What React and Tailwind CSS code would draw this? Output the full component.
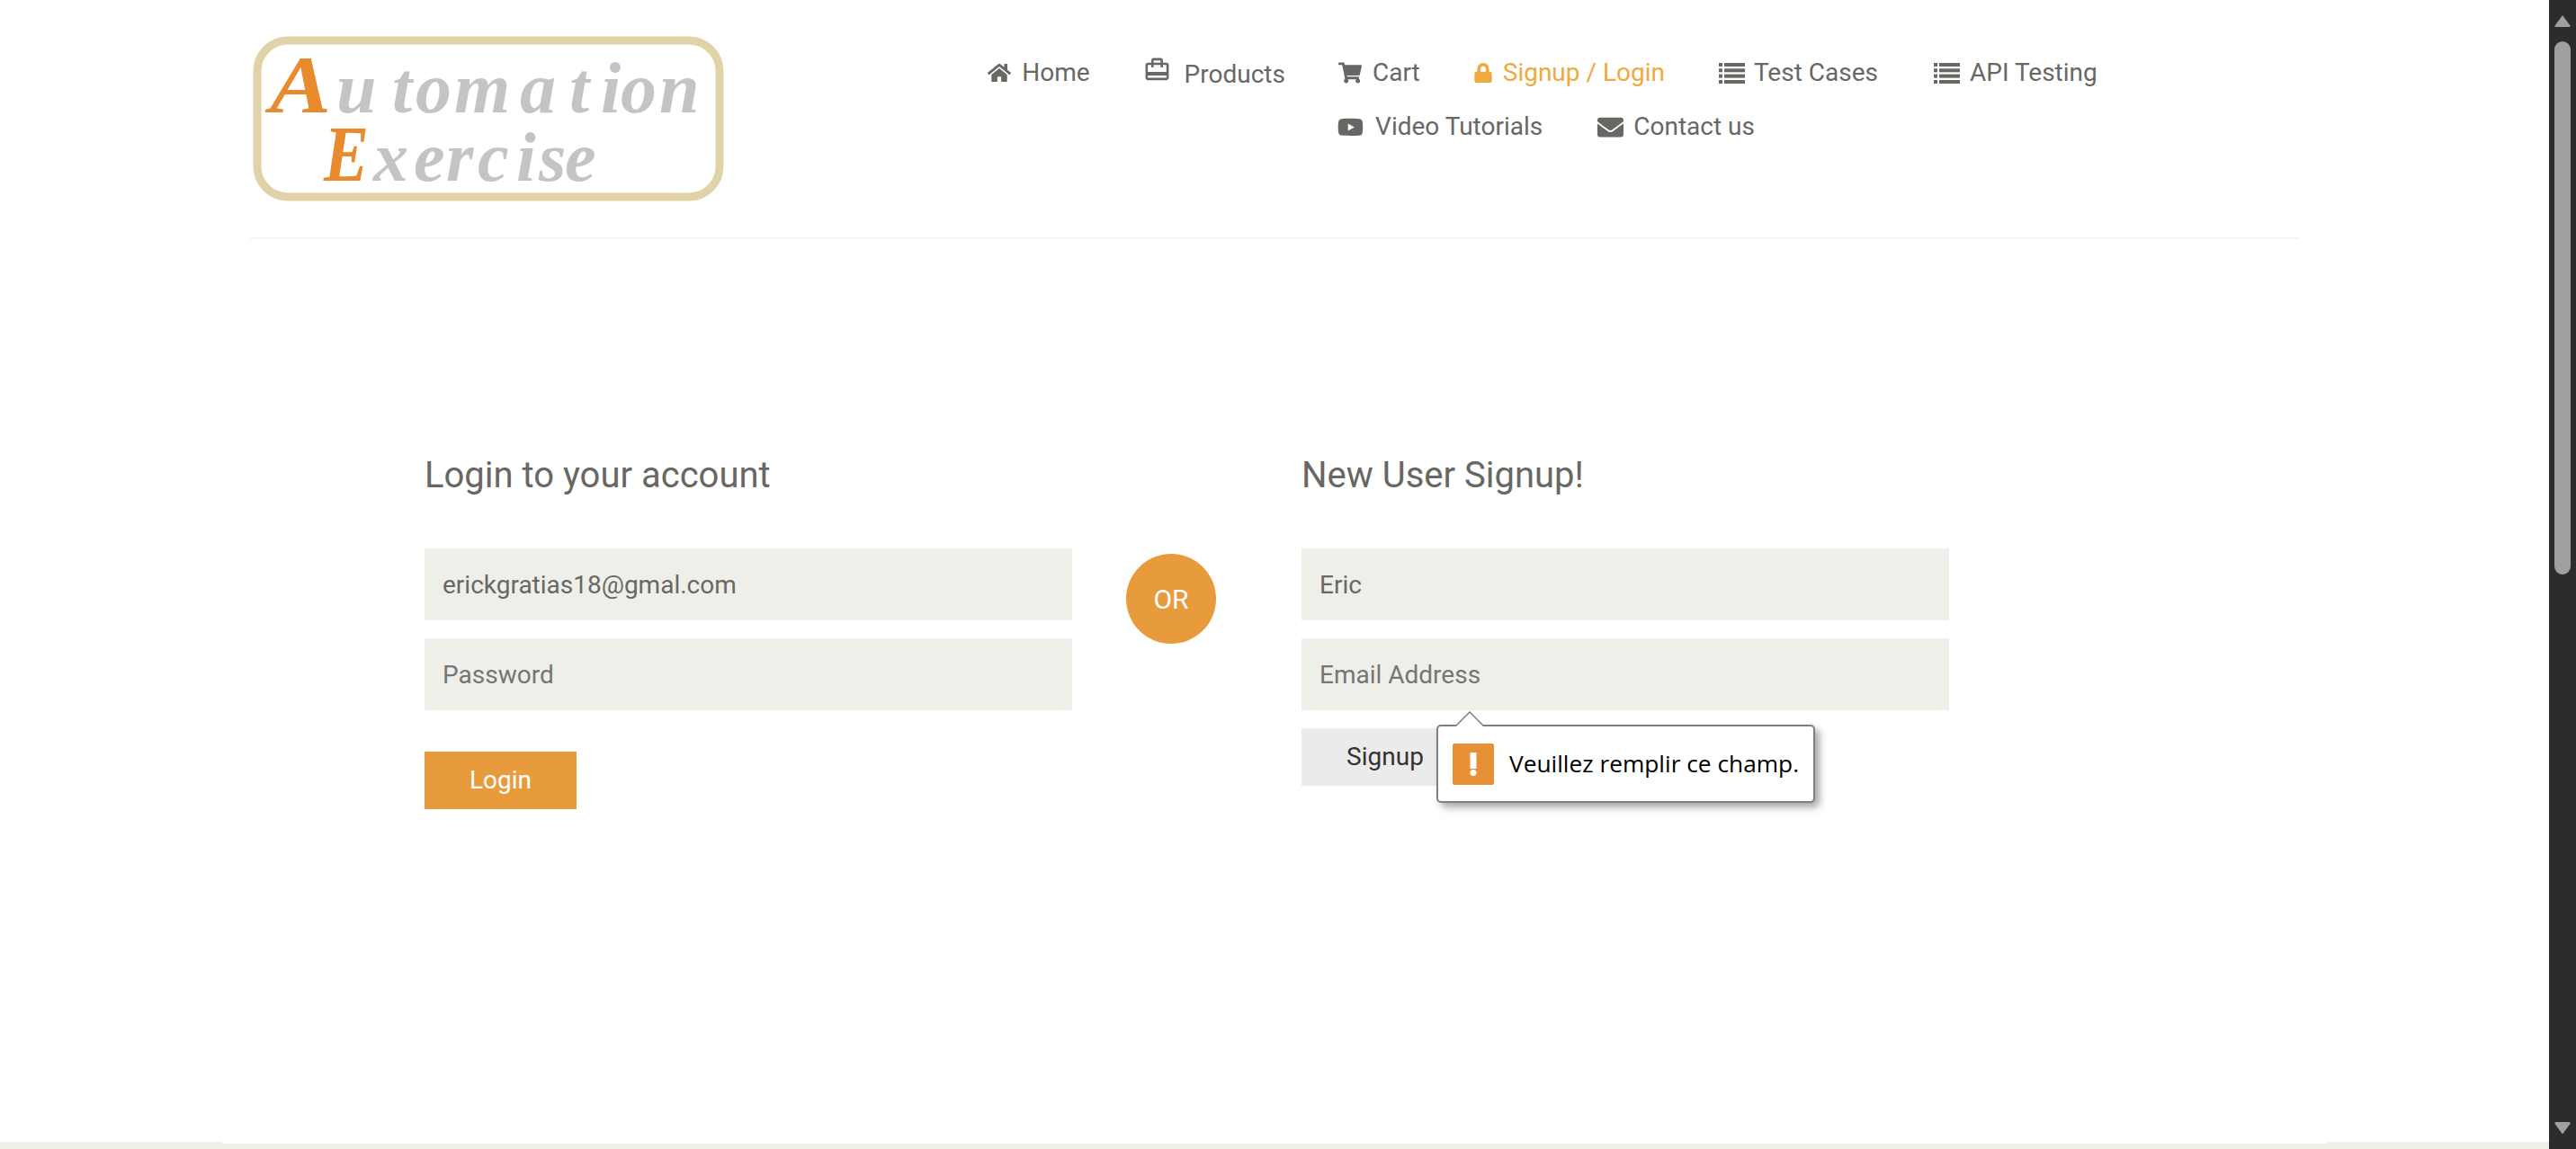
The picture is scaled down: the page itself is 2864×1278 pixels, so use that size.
import React from "react";
import { FaHome, FaShoppingCart, FaLock, FaYoutube, FaEnvelope } from "react-icons/fa";
import { MdCardTravel } from "react-icons/md";

function NavItem({ icon, label, gap, className = "", textClass = "" }) {
  return (
    <a className={"flex items-center " + gap + " " + className}>
      {icon}
      <span className={textClass}>{label}</span>
    </a>
  );
}

function ListIcon() {
  return (
    <svg width="29" height="23" viewBox="0 0 29 23" fill="currentColor" className="shrink-0">
      <rect x="0" y="0" width="4" height="4" />
      <rect x="6" y="0" width="23" height="4" />
      <rect x="0" y="6.3" width="4" height="4" />
      <rect x="6" y="6.3" width="23" height="4" />
      <rect x="0" y="12.6" width="4" height="4" />
      <rect x="6" y="12.6" width="23" height="4" />
      <rect x="0" y="19" width="4" height="4" />
      <rect x="6" y="19" width="23" height="4" />
    </svg>
  );
}

function Logo() {
  return (
    <svg width="528" height="186" viewBox="0 0 528 186" className="block">
      <rect x="8" y="6" width="514" height="174" rx="34" fill="#fff" stroke="#e0d3a8" strokeWidth="9" />
      <g fontFamily="'Liberation Serif', serif" fontStyle="italic" fontWeight="700">
        <text x="22" y="86" fontSize="92" fill="#e98a2f" textLength="68" lengthAdjust="spacingAndGlyphs">A</text>
        <text x="96 158 184 227 300 355 390 412 455" y="86" fontSize="80" fill="#c4c4c4">utomation</text>
        <text x="82" y="162" fontSize="88" fill="#e98a2f" textLength="50" lengthAdjust="spacingAndGlyphs">E</text>
        <text x="137 182 218 253 296 321 350" y="162" fontSize="78" fill="#c4c4c4">xercise</text>
      </g>
    </svg>
  );
}

function Scrollbar() {
  return (
    <aside className="w-[30px] shrink-0 bg-[#2c2c2c] flex flex-col items-center pt-[16px] pb-[16px]">
      <svg width="18" height="14" viewBox="0 0 18 14" className="shrink-0">
        <path d="M9 1 L17.5 12.5 Q18 14 16.5 14 L1.5 14 Q0 14 .5 12.5 Z" fill="#9f9f9f" />
      </svg>
      <div className="w-[18px] h-[593px] mt-[16px] rounded-full bg-[#9f9f9f] shrink-0" />
      <svg width="18" height="14" viewBox="0 0 18 14" className="shrink-0 mt-auto">
        <path d="M9 13.5 L17.5 2 Q18 0 16.5 0 L1.5 0 Q0 0 .5 2 Z" fill="#9f9f9f" />
      </svg>
    </aside>
  );
}

const inputClass =
  "block w-[720px] h-[80px] bg-[#eeefe9] px-[20px] text-[28px] text-[#696763] placeholder:text-[#757575] outline-none";

export default function App() {
  return (
    <div className="flex h-[1278px] w-full overflow-hidden bg-white text-[#696763] [font-family:Roboto,sans-serif]">
      <main className="flex-1 min-w-0 flex flex-col">
        <header className="mx-[278px] h-[266px] shrink-0 border-b-2 border-[#f5f5f5] flex">
          <div className="pt-[39px] shrink-0">
            <Logo />
          </div>
          <nav className="w-[1400px] ml-[209px] pt-[51px] flex flex-wrap justify-center content-start gap-x-[60px] text-[28px] leading-[60px]">
            <NavItem gap="gap-[12px]" label="Home" icon={<FaHome className="w-[26px] h-[26px]" />} />
            <NavItem
              gap="gap-[18px]"
              className="ml-[2px]"
              label="Products"
              textClass="translate-y-[2px]"
              icon={<MdCardTravel className="w-[31px] h-[31px] -mx-[3px] -translate-y-[4px]" />}
            />
            <NavItem gap="gap-[12px]" className="-ml-[1px]" label="Cart" icon={<FaShoppingCart className="w-[26px] h-[26px]" />} />
            <NavItem
              gap="gap-[12px]"
              label="Signup / Login"
              className="text-[#eea93f]"
              icon={<FaLock className="w-[20px] h-[22px]" />}
            />
            <NavItem gap="gap-[10px]" label="Test Cases" icon={<ListIcon />} />
            <NavItem gap="gap-[11px]" className="ml-[2px]" label="API Testing" icon={<ListIcon />} />
            <NavItem gap="gap-[13px]" className="ml-[8px]" label="Video Tutorials" icon={<FaYoutube className="w-[29px] h-[29px]" />} />
            <NavItem gap="gap-[11px]" className="ml-[1px]" label="Contact us" icon={<FaEnvelope className="w-[29px] h-[29px]" />} />
          </nav>
        </header>

        <section className="pl-[472px] pt-[243px] flex items-start">
          <div className="w-[720px] shrink-0">
            <h2 className="text-[40px] leading-[40px] mb-[61px]">Login to your account</h2>
            <input className={inputClass} readOnly defaultValue="erickgratias18@gmal.com" />
            <input className={inputClass + " mt-[20px]"} readOnly placeholder="Password" />
            <button className="block mt-[46px] w-[169px] h-[64px] bg-[#e89b3d] text-white text-[28px]">
              Login
            </button>
          </div>

          <div className="ml-[60px] mt-[107px] w-[100px] h-[100px] rounded-full bg-[#e89b3d] text-white text-[30px] flex items-center justify-center shrink-0">
            OR
          </div>

          <div className="ml-[95px] w-[720px] shrink-0 relative">
            <h2 className="text-[40px] leading-[40px] mb-[61px]">New User Signup!</h2>
            <input className={inputClass} readOnly defaultValue="Eric" />
            <input className={inputClass + " mt-[20px]"} readOnly placeholder="Email Address" />
            <button className="block mt-[20px] w-[186px] h-[64px] bg-[#ebebeb] text-[#333] text-[28px]">
              Signup
            </button>

            <div className="absolute left-[150px] top-[297px] w-[421px] h-[87px] bg-white border-2 border-[#7f7f7f] rounded-[5px] shadow-[5px_5px_8px_rgba(0,0,0,0.35)] flex items-center pl-[16px] [font-family:'Open_Sans',sans-serif]">
              <svg width="34" height="18" viewBox="0 0 34 18" className="absolute left-[18px] -top-[17px]">
                <path d="M1 17 L17 1 L33 17" fill="#fff" stroke="#7f7f7f" strokeWidth="1.5" />
              </svg>
              <div className="w-[46px] h-[46px] rounded-[2px] bg-[#e89035] flex items-center justify-center shrink-0">
                <svg width="8" height="26" viewBox="0 0 8 26">
                  <rect x="0.5" y="0" width="7" height="18" fill="#fff" />
                  <circle cx="4" cy="22.5" r="3.5" fill="#fff" />
                </svg>
              </div>
              <span className="ml-[17px] text-[26.3px] text-black whitespace-nowrap">
                Veuillez remplir ce champ.
              </span>
            </div>
          </div>
        </section>

        <footer className="mt-auto flex items-end shrink-0">
          <div className="w-[247px] h-[8px] bg-[#eeefe9]" />
          <div className="flex-1 h-[6px] bg-[#eeefe9]" />
          <div className="w-[247px] h-[8px] bg-[#eeefe9]" />
        </footer>
      </main>
      <Scrollbar />
    </div>
  );
}
